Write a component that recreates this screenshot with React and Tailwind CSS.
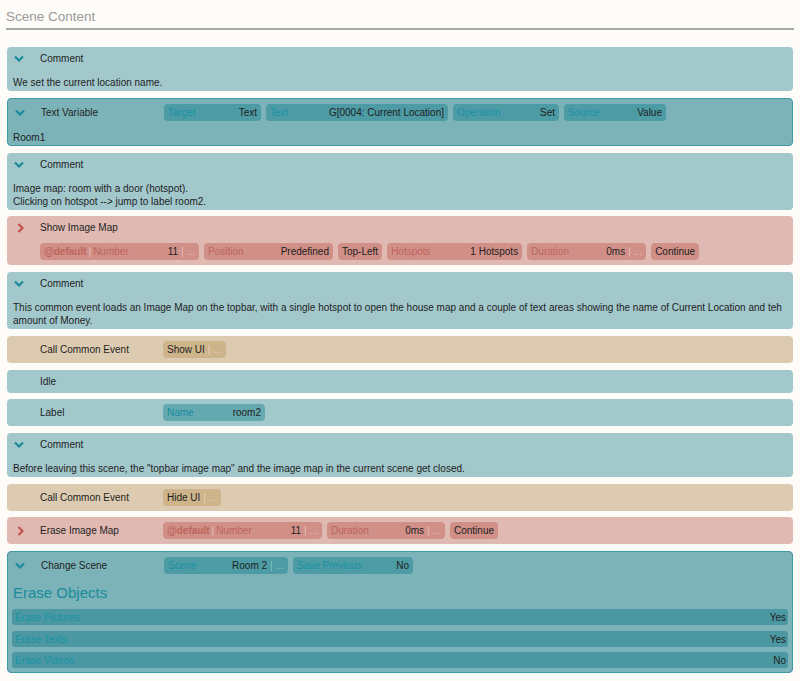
import React from 'react';

const tones = {
  teal: { row: 'bg-[#a2c8cc]', chip: 'bg-[#64a9b0]', label: 'text-[#168c9d]', sep: 'text-[#8fcad0]' },
  sel: { row: 'bg-[#7bb3b8] border border-[#3a9aa4]', chip: 'bg-[#4d9ba4]', label: 'text-[#1a93a4]', sep: 'text-[#86c3c9]' },
  pink: { row: 'bg-[#e1b9b3]', chip: 'bg-[#d08f87]', label: 'text-[#bf655c]', sep: 'text-[#ecc3bd]' },
  tan: { row: 'bg-[#dccbb0]', chip: 'bg-[#ceb48b]', label: 'text-[#a98a5c]', sep: 'text-[#e6d6bb]' },
};

const ChevronDown = () => (
  <svg width="10" height="7" viewBox="0 0 10 7" className="text-[#1a8b9b]">
    <path d="M1 1.5 L5 5.5 L9 1.5" fill="none" stroke="currentColor" strokeWidth="2.2" />
  </svg>
);

const ChevronRight = () => (
  <svg width="7" height="10" viewBox="0 0 7 10" className="text-[#c4504a]">
    <path d="M1.5 1 L5.5 5 L1.5 9" fill="none" stroke="currentColor" strokeWidth="2.2" />
  </svg>
);

const Chip = ({ tone, label, value, more, tag, w }) => {
  const t = tones[tone];
  return (
    <div className={`${t.chip} h-[17px] rounded-[4px] flex items-center pl-[4px] pr-[4px] shrink-0`} style={w ? { width: w } : undefined}>
      {tag && (
        <>
          <span className={`${t.label} font-bold`}>{tag}</span>
          <span className={`${t.sep} px-[2px]`}>|</span>
        </>
      )}
      {label && <span className={t.label}>{label}</span>}
      <span className="ml-auto text-[#1e1e1e]">{value}</span>
      {more && (
        <>
          <span className={`${t.sep} px-[3px]`}>|</span>
          <span className={t.sep}>...</span>
        </>
      )}
    </div>
  );
};

const Row = ({ tone, icon, title, chips, tight, children }) => {
  const t = tones[tone];
  return (
    <div className={`${t.row} rounded-[4px] mx-[1px] ${tight ? '-mt-[1px]' : ''}`}>
      <div className="flex items-center min-h-[23px] py-[5px]">
        <div className={`w-[33px] flex shrink-0 ${icon === 'right' ? 'pl-[10px]' : 'pl-[7px]'}`}>
          {icon === 'down' && <ChevronDown />}
          {icon === 'right' && <ChevronRight />}
        </div>
        <div className="w-[123px] shrink-0 text-[#1e1e1e] leading-[13px]">{title}</div>
        {chips && <div className="flex gap-[5px]">{chips}</div>}
      </div>
      {children}
    </div>
  );
};

const Body = ({ children }) => (
  <div className="px-[6px] pt-[1px] pb-[2px] leading-[13px] text-[#1e1e1e]">{children}</div>
);

const EraseRow = ({ label, value, extra }) => (
  <div className={`bg-[#4b98a2] h-[16px] rounded-[3px] flex items-center justify-between pl-[3px] pr-[2px] ${extra ? 'mt-[1px]' : ''}`}>
    <span className="text-[#1a93a4]">{label}</span>
    <span className="text-[#1e1e1e]">{value}</span>
  </div>
);

export default function App() {
  return (
    <div className="min-h-[681px] bg-[#fdfcf8] px-[6px] pt-[8px] text-[10px]" style={{ fontFamily: '"Liberation Sans", Arial, sans-serif' }}>
      <div className="text-[13.5px] text-[#9a9a9a] leading-[18px]">Scene Content</div>
      <div className="h-[2px] bg-[#a8a8a8] mt-[2px]" />

      <div className="flex flex-col gap-[7px] mt-[17px]">
        <Row tone="teal" icon="down" title="Comment">
          <Body><div className="pt-[5px]">We set the current location name.</div></Body>
        </Row>

        <Row
          tone="sel"
          icon="down"
          title="Text Variable"
          chips={[
            <Chip key="a" tone="sel" label="Target" value="Text" w={97} />,
            <Chip key="b" tone="sel" label="Text" value="G[0004: Current Location]" w={182} />,
            <Chip key="c" tone="sel" label="Operation" value="Set" w={106} />,
            <Chip key="d" tone="sel" label="Source" value="Value" w={102} />,
          ]}
        >
          <div className="px-[5px] pt-[5px] pb-[1px] leading-[13px] text-[#1e1e1e]">Room1</div>
        </Row>

        <Row tone="teal" icon="down" title="Comment">
          <Body>
            <div className="pt-[5px]">Image map: room with a door (hotspot).</div>
            <div>Clicking on hotspot --&gt; jump to label room2.</div>
          </Body>
        </Row>

        <Row tone="pink" icon="right" title="Show Image Map" tight>
          <div className="flex gap-[5px] pl-[33px] pt-[4px] pb-[5px]">
            <Chip tone="pink" tag="@default" label="Number" value="11" more w={159} />
            <Chip tone="pink" label="Position" value="Predefined" w={129} />
            <Chip tone="pink" value="Top-Left" />
            <Chip tone="pink" label="Hotspots" value="1 Hotspots" w={135} />
            <Chip tone="pink" label="Duration" value="0ms" more w={119} />
            <Chip tone="pink" value="Continue" />
          </div>
        </Row>

        <Row tone="teal" icon="down" title="Comment">
          <Body>
            <div className="pt-[5px]">
              This common event loads an Image Map on the topbar, with a single hotspot to open the house map and a couple of text areas showing the name of Current Location and teh amount of Money.
            </div>
          </Body>
        </Row>

        <Row tone="tan" title="Call Common Event" chips={[<Chip key="a" tone="tan" value="Show UI" more />]} />

        <Row tone="teal" title="Idle" />

        <Row tone="teal" title="Label" tight chips={[<Chip key="a" tone="teal" label="Name" value="room2" w={102} />]} />

        <Row tone="teal" icon="down" title="Comment">
          <Body>
            <div className="pt-[5px]">Before leaving this scene, the "topbar image map" and the image map in the current scene get closed.</div>
          </Body>
        </Row>

        <Row tone="tan" title="Call Common Event" chips={[<Chip key="a" tone="tan" value="Hide UI" more />]} />

        <Row
          tone="pink"
          icon="right"
          title="Erase Image Map"
          tight
          chips={[
            <Chip key="a" tone="pink" tag="@default" label="Number" value="11" more w={159} />,
            <Chip key="b" tone="pink" label="Duration" value="0ms" more w={118} />,
            <Chip key="c" tone="pink" value="Continue" />,
          ]}
        />

        <Row
          tone="sel"
          icon="down"
          title="Change Scene"
          chips={[
            <Chip key="a" tone="sel" label="Scene" value="Room 2" more w={124} />,
            <Chip key="b" tone="sel" label="Save Previous" value="No" w={120} />,
          ]}
        >
          <div className="px-[4px] pb-[4px]">
            <div className="text-[15px] leading-[20px] text-[#1a8b9b] pl-[1px] mt-[4px]">Erase Objects</div>
            <div className="flex flex-col gap-[5px] mt-[6px]">
              <EraseRow label="Erase Pictures" value="Yes" />
              <EraseRow label="Erase Texts" value="Yes" extra />
              <EraseRow label="Erase Videos" value="No" />
            </div>
          </div>
        </Row>
      </div>
    </div>
  );
}
